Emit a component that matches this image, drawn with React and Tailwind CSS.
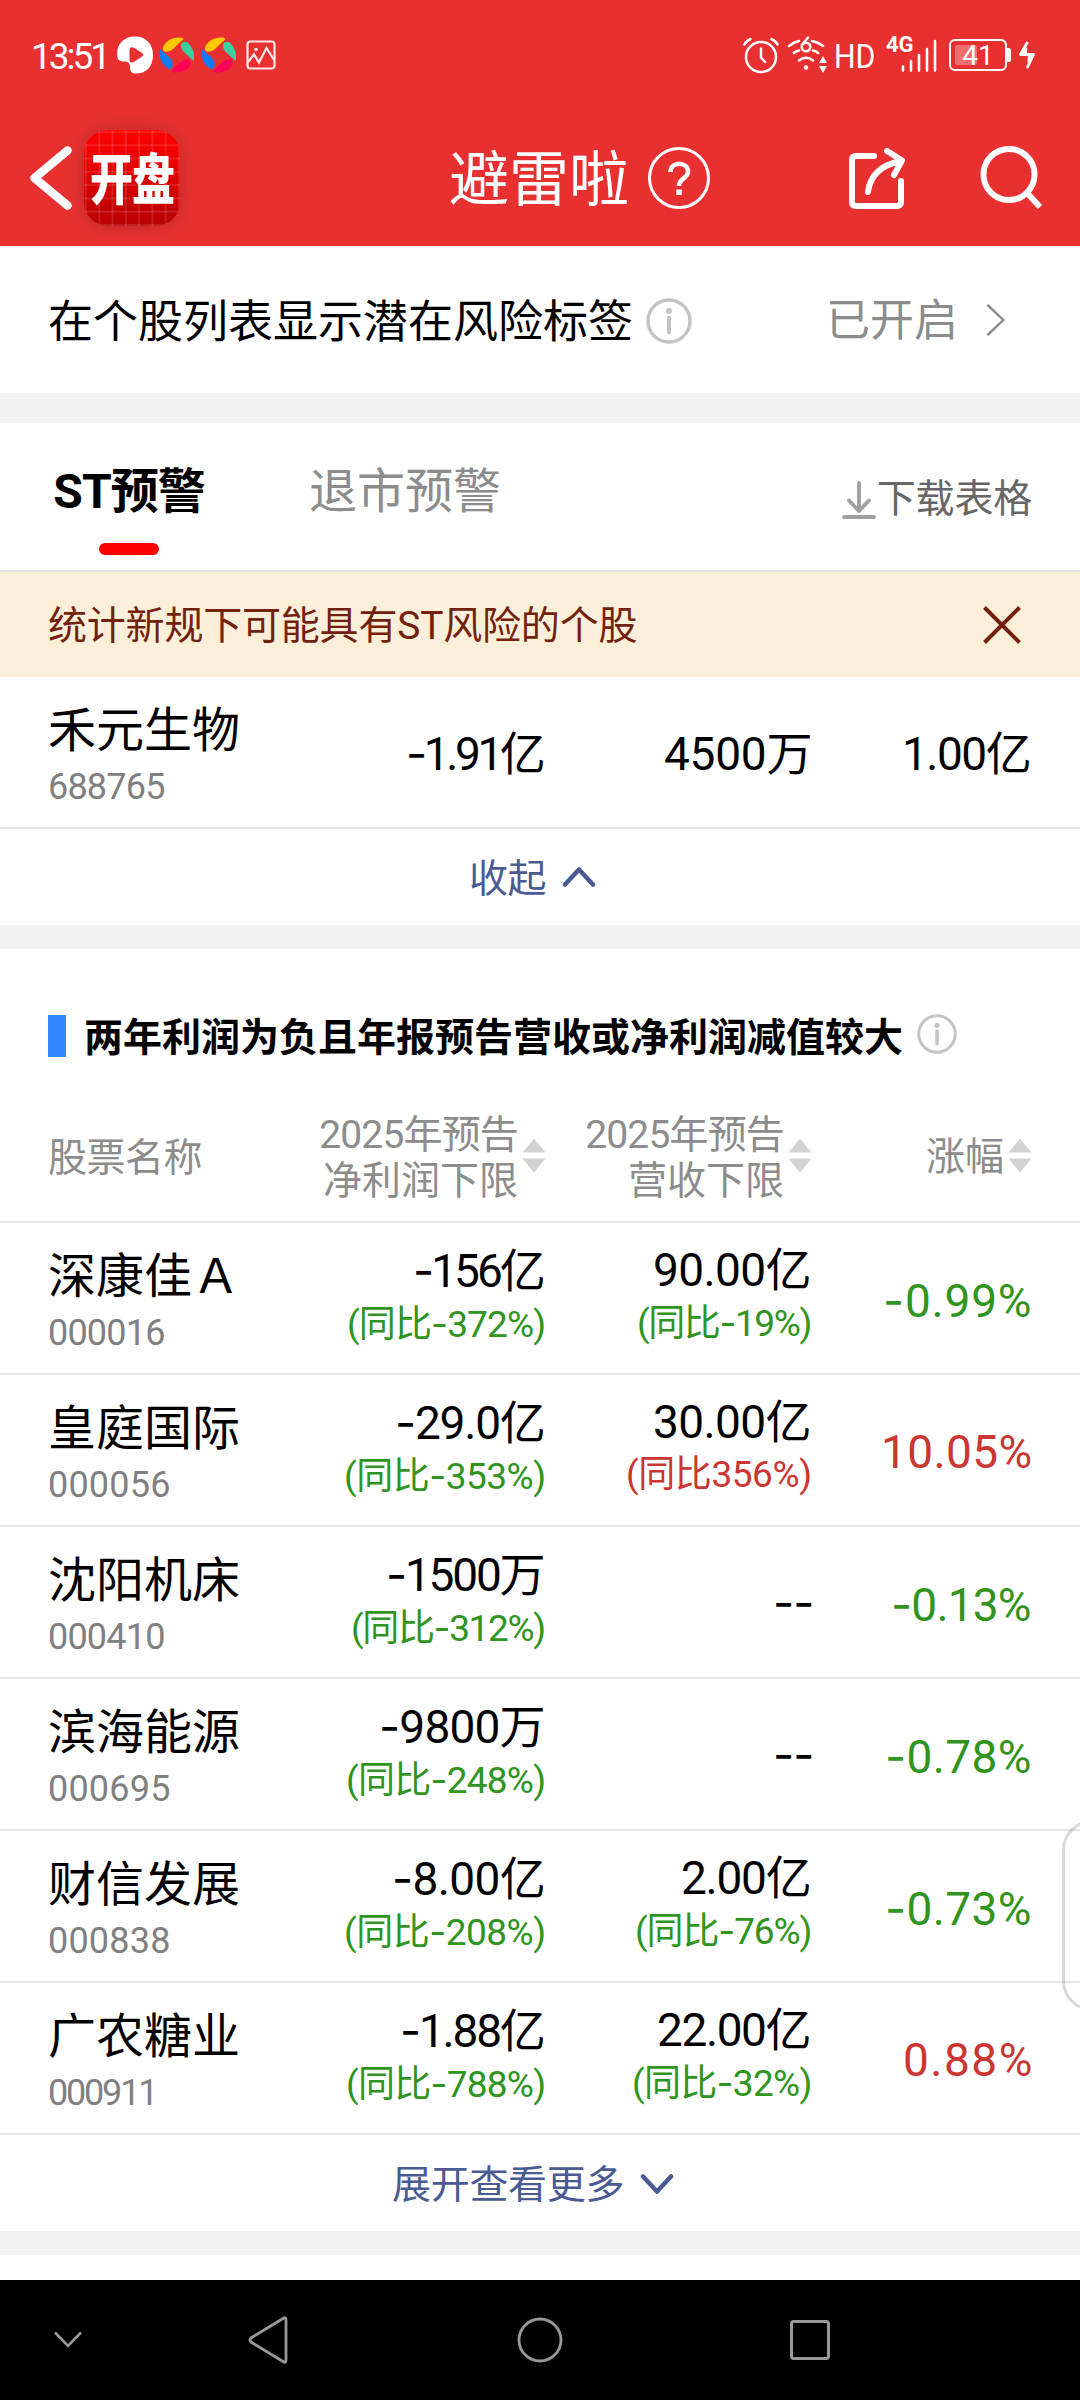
import React, { useLayoutEffect, useRef, useState } from "react";

const FONT = "font-[Roboto,'Noto_Sans_CJK_SC',sans-serif]";

// Renders a single line of text whose letters are spread over a given width.
function Fit({ w, children, className = "" }) {
  const ref = useRef(null);
  const [ls, setLs] = useState(0);
  useLayoutEffect(() => {
    ref.current.style.letterSpacing = "0px";
    const nat = ref.current.offsetWidth;
    const next = (w - nat) / Math.max(1, children.length - 1);
    ref.current.style.letterSpacing = next + "px";
    setLs(next);
  }, [w, children]);
  return (
    <span className={"block shrink-0 whitespace-nowrap " + className} style={{ width: w }}>
      <span ref={ref} style={{ letterSpacing: ls }}>
        {children.split(/(-)/).map((p, i) =>
          p === "-" ? <span key={i} className="font-[Inter]">-</span> : p
        )}
      </span>
    </span>
  );
}

function Pinwheel() {
  return (
    <svg width="36" height="36" viewBox="0 0 36 36" className="block">
      <path d="M4 13C3 7 11 0.500 20 0.500C23 0.500 25 1 24 2.500L14 12C10 15.500 5 15.500 4 13Z" fill="#ffc800" />
      <path d="M22 8C23 3.500 28 3.500 31 8C34.500 13 36 18 34.500 24L25 15C22.500 12.500 21.500 10 22 8Z" fill="#3ccfa0" />
      <path d="M31.500 24C33.500 30 26 35.500 16 35.500C13 35.500 11.500 34.500 13 33L21 25.500C25 22 30 21 31.500 24Z" fill="#ff0057" />
      <path d="M1.500 12.500L11 21C14 24 14.500 29 12 31.500C8 33.500 0 24 0.500 16C0.500 14 0.800 12.500 1.500 12.500Z" fill="#0a7dff" />
    </svg>
  );
}

function Info({ size, className = "" }) {
  return (
    <svg width={size} height={size} viewBox="0 0 46 46" fill="none" stroke="#c4c4c4" className={"block " + className}>
      <circle cx="23" cy="23" r="21" strokeWidth="3.4" />
      <circle cx="23" cy="13" r="3" fill="#c4c4c4" stroke="none" />
      <path d="M23 19.500V34.500" strokeWidth="4" strokeLinecap="round" />
    </svg>
  );
}

function Sort() {
  return (
    <svg width="24" height="35" viewBox="0 0 24 35" fill="#d2d2d2" className="ml-[4px] block shrink-0">
      <path d="M0.500 14.500L12 0.500L23.500 14.500Z M0.500 20.500L12 34.500L23.500 20.500Z" />
    </svg>
  );
}

function StatusBar() {
  return (
    <div className="flex h-[110px] items-center pl-[31px] text-white">
      <Fit w={80} className="pt-[4px] text-[37px] leading-[40px]">13:51</Fit>
      <svg width="36" height="38" viewBox="0 0 36 38" className="ml-[6px] block">
        <path fillRule="evenodd" fill="#fff" d="M18 0.500C29 0.500 36 8 36 19C36 30 30 37.500 19 37.500C14 37.500 13 35 13 31C13 27 11 25.500 7 25.500C2 25.500 0 23 0 18C0 8 7 0.500 18 0.500ZM12.500 14V24C12.500 27 15 27 17.500 25.500L25 20.500C27 19 26.500 18 25 17L17.500 12C15 10.500 12.500 11 12.500 14Z" />
      </svg>
      <div className="ml-[6px] flex gap-[6px]"><Pinwheel /><Pinwheel /></div>
      <svg width="30" height="30" viewBox="0 0 30 30" fill="none" stroke="#fff" strokeWidth="2.200" className="ml-[9px] block opacity-90">
        <rect x="1.500" y="1.500" width="27" height="27" rx="3" />
        <path d="M2 22L8 14.500L13 22.500L20.500 8L28 20" />
        <circle cx="10" cy="9.500" r="1.800" fill="#fff" stroke="none" />
      </svg>
      <svg width="38" height="38" viewBox="0 0 38 38" fill="none" stroke="#fff" strokeWidth="2.500" strokeLinecap="round" className="ml-[466px] block">
        <circle cx="19" cy="21" r="15" />
        <path d="M19 12.500V21.500L23 26M2.500 8.500Q4 5 8.500 3M35.500 8.500Q34 5 29.500 3" />
      </svg>
      <svg width="40" height="38" viewBox="0 0 40 38" fill="none" stroke="#fff" strokeWidth="2.500" strokeLinecap="round" className="ml-[7px] block">
        <path d="M2 10Q7 6 12 5M25 5Q31 6 36 10M7 17Q9 15 12 14.500M26 14.500Q29 15 31 17M12 24.500Q19 19 26 24.500M21 1.500L15 9" />
        <circle cx="19" cy="11" r="4.300" />
        <circle cx="19" cy="31.500" r="2.200" fill="#fff" stroke="none" />
        <path d="M36 20L40 27H32ZM36 37L40 30H32Z" fill="#fff" stroke="none" />
      </svg>
      <div className="ml-[7px] w-[42px] pt-[2px]">
        <span className="block origin-left scale-x-[.89] text-[34px] leading-[40px]">HD</span>
      </div>
      <div className="relative ml-[10px] h-[36px] w-[52px]">
        <span className="absolute left-0 top-[-2px] text-[22px] font-bold leading-[20px]">4G</span>
        <svg width="52" height="36" viewBox="0 0 52 36" stroke="#fff" strokeWidth="2.600" strokeLinecap="round" className="block">
          <path d="M17 29.500V33.500M25 24V33.500M33 18V33.500M41 12V33.500M49 4V33.500" />
        </svg>
      </div>
      <div className="relative ml-[11px] h-[32px] w-[58px] rounded-[6px] border-[2.500px] border-white">
        <div className="absolute left-[4px] top-[4px] h-[20px] w-[22px] rounded-[2px] bg-white/30" />
        <span className="absolute left-0 top-0 w-[54px] text-center text-[28px] leading-[29px]">41</span>
        <div className="absolute right-[-6px] top-[7px] h-[14px] w-[4px] rounded-r-[2px] bg-white" />
      </div>
      <svg width="18" height="28" viewBox="0 0 18 28" fill="none" stroke="#fff" strokeWidth="2.800" strokeLinejoin="round" strokeLinecap="round" className="ml-[11px] block">
        <path d="M9 2L2.500 13.500H15.500L9.500 26" />
        <path d="M8.500 7L2.500 13.500H8ZM15.500 13.500L10 21L10.500 13.500Z" fill="#fff" strokeWidth="1" />
      </svg>
    </div>
  );
}

function TitleBar() {
  return (
    <div className="flex h-[136px] items-center pl-[29px] text-white">
      <svg width="44" height="66" viewBox="0 0 44 66" fill="none" stroke="#fff" strokeWidth="8.500" strokeLinecap="round" strokeLinejoin="round" className="block">
        <path d="M38.500 5.500L5.500 33L38.500 60.500" />
      </svg>
      <div className="ml-[11px] flex h-[96px] w-[96px] items-center justify-center overflow-hidden rounded-[24px] bg-[linear-gradient(90deg,rgba(255,255,255,.12)_1.5px,transparent_1.5px),linear-gradient(rgba(255,255,255,.12)_1.5px,transparent_1.5px),linear-gradient(#ff0000,#b80000)] bg-[length:13.3px_13.3px,13.3px_13.3px,100%_100%] bg-[position:1px_1px,1px_1px,0_0] shadow-[0_0_18px_rgba(120,40,40,.4)]">
        <span className="translate-y-[2px] scale-y-[1.27] whitespace-nowrap text-[43px] font-black leading-none tracking-[-1px]">开盘</span>
      </div>
      <span className="ml-[269px] whitespace-nowrap pt-[5px] text-[60px] leading-[60px]">避雷啦</span>
      <svg width="64" height="64" viewBox="0 0 64 64" fill="none" stroke="#fff" className="ml-[18px] block">
        <circle cx="32" cy="32" r="29.500" strokeWidth="3" />
        <path d="M23.500 26C23.500 15 41 15 41 26C41 32.500 32 32 32 40" strokeWidth="4.500" />
        <path d="M32 43.500V49" strokeWidth="5.500" />
      </svg>
      <svg width="60" height="64" viewBox="0 0 60 64" fill="none" stroke="#fff" strokeWidth="6" strokeLinecap="round" strokeLinejoin="round" className="ml-[137px] block">
        <path d="M26 10H8Q4 10 4 14V56Q4 60 8 60H49Q53 60 53 56V35" />
        <path d="M20 46Q23 21 53 15M39 5L54 14.500L46 29" />
      </svg>
      <svg width="64" height="64" viewBox="0 0 64 64" fill="none" stroke="#fff" className="ml-[72px] block">
        <circle cx="29" cy="28.500" r="25.500" strokeWidth="6" />
        <path d="M47 47L60 61" strokeWidth="6" />
      </svg>
    </div>
  );
}

const GREEN = "text-[#2f9420]";
const RED = "text-[#cb3532]";

const ROWS = [
  { name: "深康佳Ａ", code: "000016", cw: 117, a: ["-156亿", 133, "(同比-372%)", 199], b: ["90.00亿", 159, "(同比-19%)", 175, GREEN], p: ["-0.99%", 149, GREEN] },
  { name: "皇庭国际", code: "000056", cw: 122, a: ["-29.0亿", 151, "(同比-353%)", 202], b: ["30.00亿", 159, "(同比356%)", 186, RED], p: ["10.05%", 151, RED] },
  { name: "沈阳机床", code: "000410", cw: 117, a: ["-1500万", 160, "(同比-312%)", 195], b: ["--", 41], p: ["-0.13%", 141, GREEN] },
  { name: "滨海能源", code: "000695", cw: 122, a: ["-9800万", 167, "(同比-248%)", 200], b: ["--", 41], p: ["-0.78%", 147, GREEN] },
  { name: "财信发展", code: "000838", cw: 122, a: ["-8.00亿", 154, "(同比-208%)", 202], b: ["2.00亿", 131, "(同比-76%)", 177, GREEN], p: ["-0.73%", 147, GREEN] },
  { name: "广农糖业", code: "000911", cw: 110, a: ["-1.88亿", 146, "(同比-788%)", 200], b: ["22.00亿", 155, "(同比-32%)", 180, GREEN], p: ["0.88%", 129, RED] },
];

function NameCell({ name, code, cw }) {
  return (
    <div className="flex h-full flex-col pt-[26px]">
      <span className="whitespace-nowrap text-[48px] leading-[56px]">{name}</span>
      <Fit w={cw} className="mt-[7px] text-[36px] leading-[42px] text-[#808080]">{code}</Fit>
    </div>
  );
}

function ValueCell({ v }) {
  const [main, mw, sub, sw, color = GREEN] = v;
  if (!sub)
    return (
      <div className="flex h-full items-center justify-end pt-[3px]">
        <Fit w={mw} className={"text-[46px] leading-[50px] " + (main === "--" ? "translate-x-[2px] -translate-y-[1px]" : "")}>{main}</Fit>
      </div>
    );
  return (
    <div className="flex h-full flex-col items-end pt-[22px]">
      <Fit w={mw} className="text-[46px] leading-[50px]">{main}</Fit>
      <Fit w={sw} className={"mt-[6px] text-[37px] leading-[44px] " + color}>{sub}</Fit>
    </div>
  );
}

const COLS = "grid grid-cols-[300px_198px_266px_220px] pl-[48px]";

export default function App() {
  return (
    <div className={"relative h-[2400px] w-[1080px] overflow-hidden bg-white text-black " + FONT}>
      <header className="h-[246px] bg-[#e93030]">
        <StatusBar />
        <TitleBar />
      </header>

      <section className="flex h-[147px] items-center pl-[48px]">
        <span className="whitespace-nowrap pt-[7px] text-[45px] leading-[50px]">在个股列表显示潜在风险标签</span>
        <Info size={46} className="ml-[13px] mt-[3px]" />
        <Fit w={132} className="ml-[134px] pt-[3px] text-[44px] leading-[50px] text-[#8c8c8c]">已开启</Fit>
        <svg width="20" height="34" viewBox="0 0 20 34" fill="none" stroke="#8c8c8c" strokeWidth="2.400" className="ml-[28px] mt-[1px] block">
          <path d="M1.500 2L17.500 17L1.500 32" />
        </svg>
      </section>
      <div className="h-[30px] bg-[#f2f2f2]" />

      <nav className="flex h-[149px] border-b-2 border-[#e5e5e5] pl-[54px]">
        <div className="flex w-[150px] flex-col items-center pt-[41px]">
          <span className="whitespace-nowrap text-[48px] font-bold leading-[56px] tracking-[-1px]">ST预警</span>
          <div className="mt-[23px] h-[12px] w-[60px] rounded-full bg-[#ff0000]" />
        </div>
        <span className="ml-[105px] mt-[41px] whitespace-nowrap text-[48px] leading-[56px] text-[#8c8c8c]">退市预警</span>
        <div className="ml-auto mr-[48px] mt-[58px] flex h-[36px] items-center self-start">
          <svg width="34" height="38" viewBox="0 0 34 38" fill="none" stroke="#a0a0a0" strokeWidth="3.800" strokeLinecap="round" strokeLinejoin="round" className="mr-[1px] mt-[2px] block">
            <path d="M17 2V30M7 19.500L17 30L27 19.500M2 36H32" />
          </svg>
          <span className="whitespace-nowrap text-[39px] leading-[44px] tracking-[-.2px] text-[#666]">下载表格</span>
        </div>
      </nav>

      <div className="flex h-[105px] items-center justify-between bg-[#fcefd9] pl-[48px] pr-[59px] text-[#73210f]">
        <Fit w={589} className="pt-[2px] text-[39px] leading-[44px]">统计新规下可能具有ST风险的个股</Fit>
        <svg width="38" height="38" viewBox="0 0 38 38" fill="none" stroke="#73210f" strokeWidth="4" className="block">
          <path d="M1.500 1.500L36.500 36.500M36.500 1.500L1.500 36.500" />
        </svg>
      </div>

      <div className={COLS + " h-[152px] border-b-2 border-[#e5e5e5]"}>
        <NameCell name="禾元生物" code="688765" cw={117} />
        <ValueCell v={["-1.91亿", 140]} />
        <ValueCell v={["4500万", 148]} />
        <ValueCell v={["1.00亿", 130]} />
      </div>
      <div className="flex h-[96px] items-center pl-[469px] text-[#4a5a93]">
        <span className="pt-[3px] text-[39px] leading-[44px] tracking-[-.5px]">收起</span>
        <svg width="34" height="22" viewBox="0 0 34 22" fill="none" stroke="#4a5a93" strokeWidth="4.500" strokeLinecap="round" strokeLinejoin="round" className="ml-[16px] block">
          <path d="M3 18.500L17 3.500L31 18.500" />
        </svg>
      </div>
      <div className="h-[24px] bg-[#f2f2f2]" />

      <div className="flex h-[174px] items-center pl-[48px]">
        <div className="h-[42px] w-[18px] bg-[#3388ff]" />
        <span className="ml-[18px] whitespace-nowrap pt-[3px] text-[39px] font-bold leading-[44px]">两年利润为负且年报预告营收或净利润减值较大</span>
        <Info size={40} className="-mt-[4px] ml-[14px]" />
      </div>
      <div className={COLS + " h-[100px] border-b-2 border-[#e5e5e5] text-[39px] leading-[46px] text-[#8c8c8c]"}>
        <span className="pt-[12px] tracking-[-.5px]">股票名称</span>
        <div className="flex h-[94px] -translate-y-[15px] items-center justify-end whitespace-nowrap text-right">
          <div className="flex flex-col items-end pt-[5px]"><Fit w={200}>2025年预告</Fit><span>净利润下限</span></div>
          <Sort />
        </div>
        <div className="flex h-[94px] -translate-y-[15px] items-center justify-end whitespace-nowrap text-right">
          <div className="flex flex-col items-end pt-[5px]"><Fit w={200}>2025年预告</Fit><span>营收下限</span></div>
          <Sort />
        </div>
        <div className="flex h-[94px] -translate-y-[15px] items-center justify-end"><span className="pt-[4px]">涨幅</span><Sort /></div>
      </div>

      {ROWS.map((r) => (
        <div key={r.code} className={COLS + " h-[152px] border-b-2 border-[#e5e5e5]"}>
          <NameCell name={r.name} code={r.code} cw={r.cw} />
          <ValueCell v={r.a} />
          <ValueCell v={r.b} />
          <div className="flex h-full items-center justify-end pt-[4px]">
            <Fit w={r.p[1]} className={"text-[46px] leading-[50px] " + r.p[2]}>{r.p[0]}</Fit>
          </div>
        </div>
      ))}

      <div className="flex h-[96px] items-center pl-[392px] text-[#4a5a93]">
        <span className="pt-[4px] text-[39px] leading-[44px] tracking-[-.3px]">展开查看更多</span>
        <svg width="34" height="22" viewBox="0 0 34 22" fill="none" stroke="#4a5a93" strokeWidth="4.500" strokeLinecap="round" strokeLinejoin="round" className="ml-[16px] mt-[2px] block">
          <path d="M3 3.500L17 18.500L31 3.500" />
        </svg>
      </div>
      <div className="h-[24px] bg-[#f2f2f2]" />
      <div className="h-[25px]" />

      <footer className="flex h-[120px] items-center bg-black pl-[53px]">
        <svg width="30" height="20" viewBox="0 0 30 20" fill="none" stroke="#999" strokeWidth="2.600" className="block">
          <path d="M2 2.500L15 16L28 2.500" />
        </svg>
        <svg width="42" height="48" viewBox="0 0 42 48" fill="none" stroke="#999" strokeWidth="2.800" strokeLinejoin="round" className="ml-[165px] block">
          <path d="M35 2.500Q38 0.500 38 4V44Q38 47.500 35 45.500L3 26Q1 24 3 22Z" />
        </svg>
        <svg width="46" height="46" viewBox="0 0 46 46" fill="none" stroke="#999" strokeWidth="2.800" className="ml-[227px] block">
          <circle cx="23" cy="23" r="21" />
        </svg>
        <div className="ml-[227px] h-[40px] w-[40px] rounded-[4px] border-[3px] border-[#999]" />
      </footer>

      <div className="absolute left-[1062px] top-[1820px] h-[191px] w-[60px] rounded-[30px] border-[3px] border-black/15" />
    </div>
  );
}
